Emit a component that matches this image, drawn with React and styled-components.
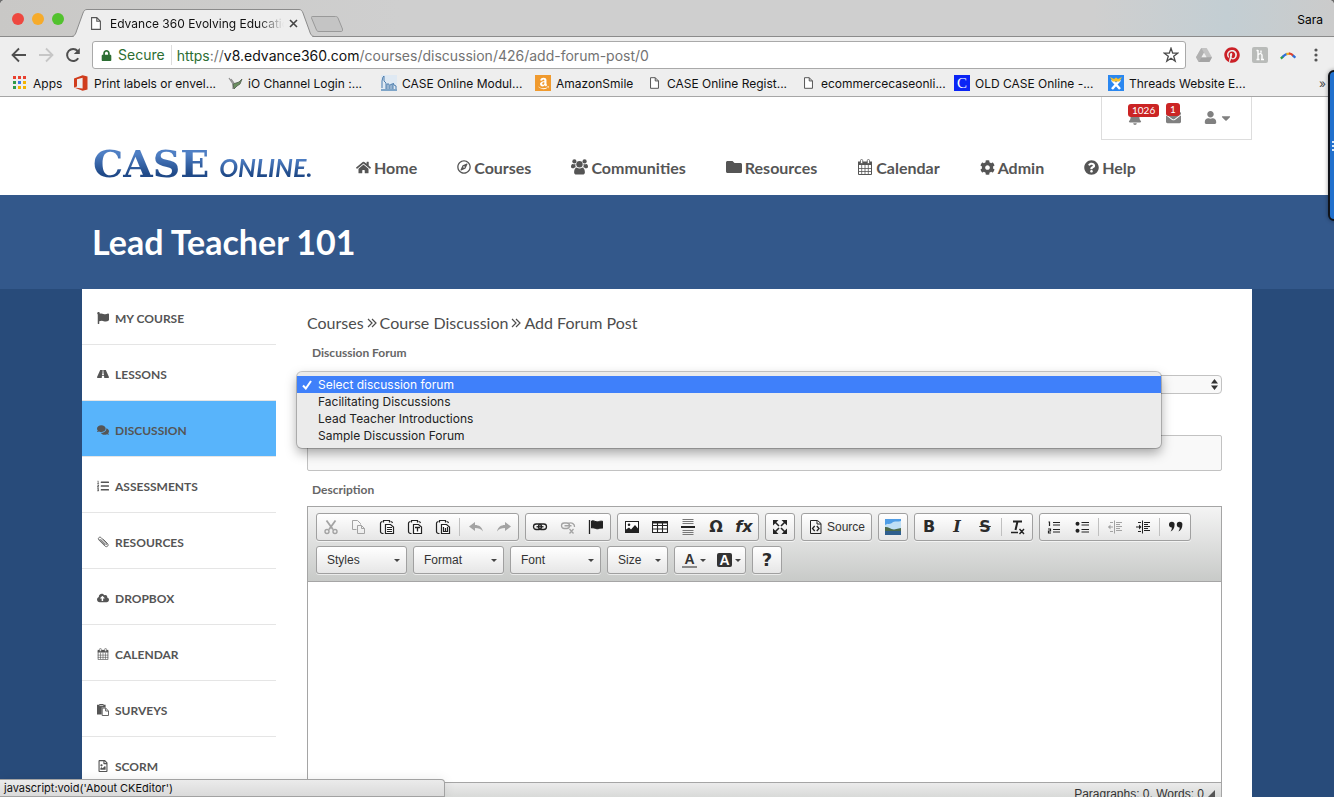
import React from 'react';
import styled, { createGlobalStyle, css } from 'styled-components';
import {
  FaHome, FaRegCompass, FaFolder, FaCog, FaQuestionCircle, FaFlag, FaRoad, FaComments,
  FaListOl, FaCloudUploadAlt, FaRegFileImage, FaBell, FaEnvelope, FaUser,
  FaCaretDown, FaLock, FaPinterest, FaAmazon,
} from 'react-icons/fa';

const GlobalStyle = createGlobalStyle`
  * { box-sizing: border-box; }
  body { margin: 0; background: #6d6d6d; }
  button, input, select, textarea { font: inherit; color: inherit; margin: 0; }
  button { border: 0; background: none; padding: 0; cursor: pointer; }
  a { color: inherit; text-decoration: none; }
  svg { display: block; flex: none; }
  ul { list-style: none; margin: 0; padding: 0; }
`;

/* ---------- icons ---------- */

const CalendarGrid = ({ size = 16 }) => (
  <svg width={size} height={size} viewBox="0 0 16 16" fill="none" stroke="currentColor">
    <path d="M1.5 3.5h13v12h-13z" />
    <path d="M1 9.5h14M1 12.5h14M4.7 6v9M8 6v9M11.3 6v9" strokeWidth=".8" />
    <rect x="1" y="2.500" width="14" height="3.500" fill="currentColor" stroke="none" />
    <rect x="3.500" y=".5" width="2.200" height="4" rx="1" fill="#fff" strokeWidth=".8" />
    <rect x="10.300" y=".5" width="2.200" height="4" rx="1" fill="#fff" strokeWidth=".8" />
  </svg>
);

const PeopleIcon = () => (
  <svg width="17" height="16" viewBox="0 0 17 16" fill="currentColor">
    <circle cx="3.400" cy="2.400" r="2.100" />
    <circle cx="13.600" cy="2.400" r="2.100" />
    <path d="M1.600 5c-1 .3-1.600 1.200-1.600 2.600 0 1 .5 1.600 1.400 1.600h1.400c.5-.6 1.200-1 2-1A4.500 4.500 0 0 1 4.500 5C3.600 5.400 2.500 5.400 1.600 5zM15.400 5c1 .3 1.600 1.200 1.600 2.600 0 1-.5 1.600-1.400 1.600h-1.400c-.5-.6-1.200-1-2-1A4.500 4.500 0 0 0 12.500 5c.9.4 2 .4 2.900 0z" />
    <circle cx="8.500" cy="5.300" r="3.200" />
    <path d="M5.800 8.400c-1.700.3-2.700 2-2.700 4.800 0 1.500.9 2.300 2.300 2.300h6.200c1.400 0 2.300-.8 2.300-2.300 0-2.800-1-4.500-2.700-4.800-1.600 1.300-3.800 1.300-5.400 0z" />
  </svg>
);

const ClipIcon = () => (
  <svg width="12" height="12" viewBox="0 0 12 12" fill="none" stroke="currentColor" strokeWidth=".9">
    <path d="M3.500 3.200l5 5c.9.9 1.900-.3 1.100-1.100L4.200 1.700C2.600.2.300 2.300 1.900 4l6 6c2 1.900 4.400-.6 2.500-2.500L6.200 3.300" />
    <path d="M2.400 3.200l5.800 5.900" strokeWidth=".7" />
  </svg>
);

const PasteSolid = () => (
  <svg width="12" height="12" viewBox="0 0 12 12">
    <path d="M0 .8h2.300V0h4.200v.8H8.600v2.700H4.700v7H0z" fill="currentColor" />
    <path d="M2.500 1.600h3.800" stroke="#fff" strokeWidth=".7" />
    <path d="M5.200 4.100h3.500l2.800 2.800v4.600H5.200zM8.600 4.200v2.800h2.800" fill="#fff" stroke="currentColor" strokeWidth=".9" />
  </svg>
);

const DoubleAngle = () => (
  <svg width="10" height="10" viewBox="0 0 10 10" fill="none" stroke="currentColor" strokeWidth="1.2">
    <path d="M1 1l4 4-4 4M5 1l4 4-4 4" />
  </svg>
);

const PageIcon = ({ w = 10, h = 13 }) => (
  <svg width={w} height={h} viewBox="0 0 10 13" fill="#fff" stroke="#555" strokeWidth="1.1">
    <path d="M.6.6h5.2l3.6 3.6v8.2H.6zM5.8.6v3.6h3.6" />
  </svg>
);

const BackIcon = () => (
  <svg width="16" height="16" viewBox="0 0 16 16" fill="none" stroke="currentColor" strokeWidth="1.8">
    <path d="M15 8H2M8 1.5L1.5 8 8 14.5" />
  </svg>
);

const ForwardIcon = () => (
  <svg width="16" height="16" viewBox="0 0 16 16" fill="none" stroke="currentColor" strokeWidth="1.8">
    <path d="M1 8h13M8 1.5L14.5 8 8 14.5" />
  </svg>
);

const ReloadIcon = () => (
  <svg width="16" height="16" viewBox="0 0 16 16" fill="none" stroke="currentColor" strokeWidth="2">
    <path d="M13.2 11.2A6 6 0 1 1 12.6 4" />
    <path d="M14.8 1v6H8.8z" fill="currentColor" stroke="none" />
  </svg>
);

const StarIcon = () => (
  <svg width="16" height="16" viewBox="0 0 16 16" fill="none" stroke="#4a4a4a" strokeWidth="1.3">
    <path d="M8 1.200l1.700 4.900 5 .1-4 3.100 1.500 4.900L8 11.300l-4.200 2.900 1.500-4.900-4-3.100 5-.1z" />
  </svg>
);

const DriveIcon = () => (
  <svg width="16" height="14" viewBox="0 0 16 14">
    <path d="M5.3 0h5.4L16 9.3 13.4 14H2.7L0 9.3z" fill="#c3c3c3" />
    <path d="M5.3 0L0 9.3 2.7 14 8 4.7z" fill="#b0b0b0" />
    <path d="M5.4 9.3h10.6L13.4 14H2.7z" fill="#a4a4a4" />
    <path d="M8 4.8l2.6 4.5H5.4z" fill="#eee" />
  </svg>
);

const HoneyIcon = () => (
  <svg width="16" height="16" viewBox="0 0 16 16">
    <rect width="16" height="16" rx="2" fill="#b9bbb9" />
    <path d="M6 3v9.5M4.500 3.500H6M4.500 12.500h3M6 8c1.500-2 4-1.800 4 .3v4.200M9 12.500h3M9 3.500v2.200" fill="none" stroke="#fff" strokeWidth="1.4" />
  </svg>
);

const ArcIcon = () => (
  <svg width="16" height="9" viewBox="0 0 18 10" fill="none" strokeWidth="2.600">
    <path d="M1 8.500L3.500 6" stroke="#2d9b4c" />
    <path d="M3 6.500C4.500 5 6 4 8 3" stroke="#2e6fd8" />
    <path d="M7.200 3.400L10.500 2.800" stroke="#f3b420" />
    <path d="M10 2.600C12 2.800 14 4 15 5.400" stroke="#dd4430" />
    <path d="M14.500 5L17.400 7.500" stroke="#2e6fd8" />
  </svg>
);

const DotsIcon = () => (
  <svg width="4" height="14" viewBox="0 0 4 14" fill="#555">
    <circle cx="2" cy="2" r="1.6" /><circle cx="2" cy="7" r="1.6" /><circle cx="2" cy="12" r="1.6" />
  </svg>
);

const AppsIcon = () => {
  const colors = ['#e8402f', '#e8402f', '#e8402f', '#2f9a4a', '#3b78e7', '#f4b400', '#2f9a4a', '#f4b400', '#f4b400'];
  return (
    <svg width="14" height="14" viewBox="0 0 14 14">
      {colors.map((c, i) => <rect key={i} x={(i % 3) * 5} y={Math.floor(i / 3) * 5} width="3" height="3" fill={c} />)}
    </svg>
  );
};

const OfficeIcon = () => (
  <svg width="14" height="16" viewBox="0 0 14 16">
    <path d="M0 3.500L8.600.2 13.500 1.600v12.800L8.600 15.800 0 12.600l8.600.9V2.800L3 4.200v7.200L0 12.600z" fill="#d03c1c" />
  </svg>
);

const HeronIcon = () => (
  <svg width="16" height="16" viewBox="0 0 16 16" fill="none">
    <path d="M2 3l4 6v5M4 4l3 4" stroke="#8d8d8d" strokeWidth="1.200" />
    <path d="M6 9l3-1 3-1 3-3-2 5-3 2-3 3z" fill="#6b8f60" stroke="#4e5a4b" strokeWidth=".8" />
  </svg>
);

const SkylineIcon = () => (
  <svg width="16" height="16" viewBox="0 0 16 16">
    <rect width="16" height="16" fill="#dfe9f3" />
    <path d="M1 13V6l1-4 1-1v5l2 2v6M6 14V9h2v5M9 14v-4l2-1v5M12 14V8l1 2 2 1v3" fill="none" stroke="#4f7fae" />
    <path d="M0 14h16v2H0z" fill="#7fa5c8" />
  </svg>
);

const RunnerIcon = () => (
  <svg width="16" height="16" viewBox="0 0 16 16">
    <rect width="16" height="16" fill="#2a87f0" />
    <path d="M4 14L12 5M12 14L4 5" stroke="#fff" strokeWidth="2.600" />
    <path d="M2 2l4 2 2-1.500L10 4l4-2-2.500 4.500h-7z" fill="#f7c02c" />
  </svg>
);

const Ink = ({ children, faded }) => (
  <svg width="16" height="16" viewBox="0 0 16 16" fill="none" stroke={faded ? '#a3a3a3' : '#222'} color={faded ? '#a3a3a3' : '#222'}>
    {children}
  </svg>
);

const Clipboard = ({ children }) => (
  <Ink>
    <path d="M4.500 14.500h-1a2 2 0 0 1-2-2v-8a2 2 0 0 1 2-2M11.500 2.500a2 2 0 0 1 2 1.500" strokeWidth="1.200" />
    <path d="M4.500 3.500v-2h6v2" strokeWidth="1.200" />
    <path d="M6.500 5.500h5l3 2.500v6.500h-8z" fill="#fff" strokeWidth="1.200" />
    {children}
  </Ink>
);

const glyphs = {
  Cut: <Ink faded><path d="M3.500 1.500l6.500 9M12.500 1.500L6 10.500" strokeWidth="1.800" /><circle cx="4" cy="12.500" r="2" strokeWidth="1.400" /><circle cx="12" cy="12.500" r="2" strokeWidth="1.400" /></Ink>,
  Copy: <Ink faded><path d="M5.500 10.500h-4v-9h5l3 3v1" /><path d="M6.500 6.500h4l3 3v5h-7zM10.500 6.500v3h3" /></Ink>,
  Paste: <Clipboard><path d="M8 8.500h5M8 10.500h5M8 12.500h5" /></Clipboard>,
  'Paste as plain text': <Clipboard><path d="M8 8.500h5M10.500 8.500v4" strokeWidth="1.300" /></Clipboard>,
  'Paste from Word': <Clipboard><path d="M8.500 8v4.500h4V8M10.500 9v3" strokeWidth="1.200" /></Clipboard>,
  Undo: <Ink faded><path d="M1 7.500L7 3v3c4 0 7 2 8 6.500-2-2.600-4.500-3.500-8-3.500v3z" fill="currentColor" stroke="none" /></Ink>,
  Redo: <Ink faded><path d="M15 7.500L9 3v3c-4 0-7 2-8 6.500 2-2.600 4.500-3.500 8-3.500v3z" fill="currentColor" stroke="none" /></Ink>,
  Link: <Ink><rect x="1.500" y="5" width="8" height="5.500" rx="2.700" strokeWidth="1.300" /><rect x="6.500" y="5" width="8" height="5.500" rx="2.700" strokeWidth="1.300" /><path d="M4.500 7.750h7" strokeWidth="1.300" /></Ink>,
  Unlink: <Ink faded><rect x="1.500" y="4" width="8" height="5.500" rx="2.700" strokeWidth="1.300" /><path d="M8 4.500c4-1.500 7 .5 6.500 3.500M4.500 6.750h7M9.500 10l4 4.500M13.500 10l-4 4.500" strokeWidth="1.300" /></Ink>,
  Anchor: <Ink><path d="M1.500 1v14" strokeWidth="1.300" /><path d="M3.500 2c2.500-1 4 1.200 6 .8 1.500-.3 2.500-.8 5-.6v7c-2-.6-4 .8-5.500.6C7 9.600 5.500 8.200 3.500 9z" fill="currentColor" /></Ink>,
  Image: <Ink><rect x="1.500" y="2.500" width="13" height="11" fill="#fff" /><path d="M2 13v-2.500l3-2 2 2 4-4.500 3 3.500V13z" fill="currentColor" stroke="none" /><circle cx="5" cy="5.800" r="1.300" fill="currentColor" stroke="none" /></Ink>,
  Table: <Ink><path d="M.5 2.500h15v11H.5zM0 6.500h16M0 10h16M5.500 3v11M10.500 3v11" fill="#fff" strokeWidth="1.100" /><path d="M0 2h16v2.500H0z" fill="currentColor" stroke="none" /></Ink>,
  'Horizontal line': <Ink><path d="M2.500 .5h11M2.500 2.500h11M2.500 4.500h11M2.500 11.500h11M2.500 13.500h11M2.500 15.500h11" stroke="#777" /><path d="M1 8h14" strokeWidth="2" /></Ink>,
  Maximize: <Ink><path d="M1 1h5.500L1 6.500zM15 1H9.500L15 6.500zM1 15h5.500L1 9.500zM15 15H9.500L15 9.500z" fill="currentColor" stroke="none" /><path d="M3 3l4 4M13 3L9 7M3 13l4-4M13 13L9 9" strokeWidth="1.600" /></Ink>,
  'Numbered list': <Ink><path d="M7 3.500h7M7 6h7M7 10.500h7M7 13h7" strokeWidth="1.200" /><path d="M2.500 3h1v4M2 10h2.500v2H2.500v2h2.500" strokeWidth="1.200" /></Ink>,
  'Bulleted list': <Ink><path d="M7.500 3.500H15M7.500 6H15M7.500 10.500H15M7.500 13H15" strokeWidth="1.200" /><circle cx="3.500" cy="4.700" r="2" fill="currentColor" stroke="none" /><circle cx="3.500" cy="11.700" r="2" fill="currentColor" stroke="none" /></Ink>,
  'Decrease indent': <Ink faded><path d="M7.500 1.500v13M9 3.500h6M9 5.500h4M9 7.500h6M9 9.500h4M9 11.500h6M3 3.500h3M3 12.500h3M1.500 8H6" /><path d="M3.500 5.500L1 8l2.500 2.500z" fill="currentColor" stroke="none" /></Ink>,
  'Increase indent': <Ink><path d="M7.500 1.500v13M9 3.500h6M9 5.500h4M9 7.500h6M9 9.500h4M9 11.500h6M3 3.500h3M3 12.500h3M1 8h4" /><path d="M4 5.500L6.500 8 4 10.500z" fill="currentColor" stroke="none" /></Ink>,
  'Block quote': <Ink><path d="M1 5.500a2.700 2.700 0 1 1 5.600 0c0 3.500-1.600 6-4 7 .9-1.300 1.300-2.500 1.300-4A2.700 2.700 0 0 1 1 5.500zM8.800 5.500a2.700 2.700 0 1 1 5.600 0c0 3.500-1.600 6-4 7 .9-1.300 1.300-2.500 1.300-4a2.700 2.700 0 0 1-2.900-3z" fill="currentColor" stroke="none" /></Ink>,
};

const SourceGlyph = () => (
  <Ink>
    <path d="M2.500 1.500h7l3.500 3v10H2.500zM9 2v3h4" />
    <path d="M6.700 7L4.500 9.500 6.700 12M8.800 7L11 9.500 8.800 12" strokeWidth="1.300" />
  </Ink>
);

const PhotoGlyph = () => (
  <svg width="16" height="16" viewBox="0 0 16 16">
    <rect width="16" height="16" fill="#4f9de6" />
    <path d="M0 6c3-2 5 0 8-3 3-1 5 0 8-1v9H0z" fill="#bfdff6" />
    <path d="M0 8c3-.5 5 2 9 2.500L16 9v3H0z" fill="#4c6a4a" />
    <path d="M0 12h16v4H0z" fill="#2f5f8e" />
  </svg>
);

const Caret = () => (
  <svg width="6" height="3" viewBox="0 0 6 3" fill="#444"><path d="M0 0h6L3 3z" /></svg>
);

const SelectArrows = styled.svg`
  position: absolute;
  right: 4px;
  top: 4px;
  pointer-events: none;
`;

/* ---------- browser window ---------- */

const chromeFont = css`font-family: Inter, Roboto, "Liberation Sans", sans-serif;`;

const Window = styled.div`
  position: relative;
  display: flex;
  flex-direction: column;
  height: 100vh;
  overflow: hidden;
  border-radius: 5px 5px 0 0;
  background: #eee;
`;

const TabStrip = styled.header`
  ${chromeFont}
  display: flex;
  align-items: flex-end;
  height: 37px;
  padding: 0 11px 0 12px;
  background: linear-gradient(90deg, #c9c8c6 0%, #cfcfcf 30%, #cfcfcf 82%, #c3ced3 92%, #cbcbcb 100%);
  border-bottom: 1px solid #8b8b8b;
  font-size: 12px;
`;

const Lights = styled.div`
  display: flex;
  gap: 8px;
  align-self: center;
  width: 60px;
  padding-top: 2px;
`;

const Light = styled.button`
  width: 12px;
  height: 12px;
  border-radius: 50%;
  background: ${(props) => props.$color};
`;

const Tab = styled.div`
  position: relative;
  display: flex;
  align-items: center;
  width: 242px;
  height: 28px;
  margin-bottom: -1px;
  padding: 0 16px 0 19px;
`;

const TabShape = styled.svg`
  position: absolute;
  inset: 0;
  width: 100%;
  height: 100%;
`;

const TabTitle = styled.span`
  position: relative;
  flex: 1;
  margin-left: 9px;
  overflow: hidden;
  white-space: nowrap;
  color: #111;
  mask-image: linear-gradient(90deg, #000 85%, transparent 100%);
`;

const TabIcon = styled.span`
  position: relative;
`;

const TabClose = styled.button`
  position: relative;
  margin-left: 5px;
`;

const NewTab = styled.button`
  align-self: center;
  margin: 11px 0 0 -3px;
`;

const Profile = styled.button`
  margin: 0 0 9px auto;
`;

const AddressBar = styled.div`
  ${chromeFont}
  display: flex;
  align-items: center;
  height: 36px;
  padding: 0 16px 0 11px;
  color: #555;
`;

const NavButton = styled.button`
  width: 27px;
  color: ${(props) => (props.$faded ? '#c6c6c6' : '#4f4f4f')};
`;

const Omnibox = styled.div`
  display: flex;
  flex: 1;
  align-items: center;
  height: 28px;
  margin-right: 10px;
  padding: 0 6px 0 8px;
  background: #fff;
  border: 1px solid #a9a9a9;
  border-radius: 3px;
  font-size: 14px;
  color: #2c6e33;
`;

const Secure = styled.span`
  margin-left: 6px;
  padding-right: 6px;
  border-right: 1px solid #ddd;
  line-height: 20px;
`;

const Url = styled.span`
  flex: 1;
  margin-left: 5px;
  color: #737373;
  b { font-weight: 400; color: #111; }
  i { font-style: normal; color: #2c6e33; }
`;

const Extensions = styled.div`
  display: flex;
  align-items: center;
  gap: 12px;
`;

const Extension = styled.button`
  display: flex;
  justify-content: center;
  width: 16px;
`;

const MenuButton = styled.button`
  margin-left: 6px;
`;

const Bookmarks = styled.nav`
  ${chromeFont}
  display: flex;
  align-items: center;
  height: 24px;
  padding: 0 8px 3px 12px;
  border-bottom: 1px solid #a6a6a6;
  font-size: 12px;
  color: #111;
`;

const Bookmark = styled.a`
  display: flex;
  flex: 0 0 ${(props) => props.$width ?? '154px'};
  align-items: center;
  gap: 5px;
  white-space: nowrap;
`;

const BookmarkIcon = styled.span`
  display: flex;
  align-items: center;
  justify-content: center;
  width: 16px;
  height: 16px;
  background: ${(props) => props.$bg ?? 'none'};
  color: #fff;
  font: 15px "Liberation Serif", serif;
`;

const More = styled.button`
  margin-left: auto;
  color: #444;
`;

const StatusBubble = styled.div`
  ${chromeFont}
  position: absolute;
  left: 0;
  bottom: 0;
  width: 445px;
  height: 18px;
  padding-left: 4px;
  background: linear-gradient(#ebebeb, #dadada);
  border: 1px solid #a2a2a2;
  border-left: 0;
  border-radius: 0 4px 0 0;
  box-shadow: 0 0 12px rgba(0, 0, 0, 0.08);
  font-size: 11px;
  line-height: 16px;
  color: #111;
`;

const EdgePanel = styled.div`
  position: absolute;
  right: -4px;
  top: 70px;
  display: flex;
  flex-direction: column;
  justify-content: center;
  gap: 2px;
  width: 10px;
  height: 151px;
  padding-left: 2px;
  background: #2170cd;
  border: 2px solid #10131a;
  border-radius: 6px 0 0 6px;
  box-shadow: 0 0 4px rgba(0, 0, 0, 0.4);
  span { height: 2px; background: #dce9f8; }
`;

/* ---------- page ---------- */

const Page = styled.div`
  flex: 1;
  overflow: hidden;
  background: #284b7a;
  font-family: Lato, "Liberation Sans", sans-serif;
  color: #555;
`;

const Container = styled.div`
  width: 100%;
  max-width: 1170px;
  margin: 0 auto;
`;

const SiteHeader = styled.header`
  background: #fff;
`;

const HeaderInner = styled(Container)`
  display: flex;
  flex-direction: column;
  height: 98px;
`;

const UserBox = styled.div`
  display: flex;
  align-self: flex-end;
  align-items: center;
  height: 43px;
  width: 151px;
  padding-left: 26px;
  border: 1px solid #ddd;
  border-top: 0;
  color: #808080;
`;

const UserButton = styled.button`
  position: relative;
  display: flex;
  flex: none;
  align-items: center;
  gap: 2px;
  width: 38px;
`;

const Badge = styled.span`
  position: absolute;
  left: 0;
  top: -7px;
  padding: 0 4px;
  background: #cb2424;
  border-radius: 3px;
  font-size: 10px;
  line-height: 13px;
  color: #fff;
`;

const Brand = styled.div`
  display: flex;
  align-items: center;
  height: 56px;
  padding-left: 11px;
`;

const Logo = styled.a`
  display: flex;
  align-items: baseline;
  gap: 10px;
  width: 263px;
  padding-bottom: 6px;
  line-height: 40px;
  span {
    background: linear-gradient(#4f7fc4 25%, #1f4988 75%);
    background-clip: text;
    color: transparent;
  }
`;

const LogoName = styled.span`
  font: bold 38px/40px "DejaVu Serif", serif;
`;

const LogoSub = styled.span`
  font: italic bold 25px/32px Lato, sans-serif;
`;

const MainNav = styled.nav`
  display: flex;
  gap: 40px;
  font-size: 16px;
  font-weight: 700;
`;

const MainLink = styled.a`
  display: flex;
  align-items: center;
  gap: 3px;
`;

const Banner = styled.div`
  background: #33588b;
  h1 {
    margin: 0;
    padding-left: 10px;
    font-size: 34px;
    font-weight: 700;
    line-height: 94px;
    color: #fff;
  }
`;

const Columns = styled(Container)`
  display: flex;
  background: #fff;
`;

const SideNav = styled.nav`
  flex: 0 0 194px;
`;

const SideLink = styled.a`
  display: flex;
  align-items: center;
  gap: 6px;
  height: 56px;
  padding: 3px 15px 0;
  border-bottom: 1px solid #e5e5e5;
  background: ${(props) => (props.$active ? '#58b4fb' : '#fff')};
  font-size: 12px;
  font-weight: 700;
`;

const Main = styled.main`
  flex: 1;
  min-width: 0;
  padding: 23px 30px 30px 31px;
`;

const Crumbs = styled.nav`
  display: flex;
  align-items: center;
  gap: 3px;
  font-size: 16px;
  line-height: 22px;
  color: #4d4d4d;
`;

const Label = styled.label`
  display: block;
  padding: 9px 5px 0;
  font-size: 12px;
  font-weight: 700;
  line-height: 20px;
  color: #666;
`;

const SelectWrap = styled.div`
  position: relative;
  margin-top: 12px;
`;

const ForumSelect = styled.select`
  display: block;
  width: 100%;
  height: 19px;
  appearance: none;
  background: #f9f9f9;
  border: 1px solid #c2c2c2;
  border-radius: 4px;
  font-size: 12px;
`;

const Options = styled.ul`
  ${chromeFont}
  position: absolute;
  z-index: 1;
  top: -3px;
  left: -10px;
  right: 61px;
  padding: 4px 0;
  background: #ebebeb;
  border-radius: 5px;
  box-shadow: 0 0 0 1px rgba(0, 0, 0, 0.2), 0 5px 12px rgba(0, 0, 0, 0.35);
  font-size: 12px;
  line-height: 17px;
  color: #222;
`;

const Option = styled.li`
  display: flex;
  align-items: center;
  padding-left: ${(props) => (props.$selected ? '5px' : '21px')};
  background: ${(props) => (props.$selected ? '#3f80fa' : 'none')};
  color: ${(props) => (props.$selected ? '#fff' : 'inherit')};
  svg { margin-right: 6px; }
`;

const TitleInput = styled.input`
  display: block;
  width: 100%;
  height: 36px;
  margin-top: 41px;
  padding: 0 10px;
  background: #f9f9f9;
  border: 1px solid #c2c2c2;
  border-radius: 2px;
`;

const Editor = styled.div`
  margin-top: 6px;
  border: 1px solid #a5a5a5;
  font-family: "Liberation Sans", Arial, sans-serif;
  font-size: 12px;
  color: #333;
`;

const Toolbar = styled.div`
  display: flex;
  flex-wrap: wrap;
  gap: 5px 6px;
  padding: 6px 8px 7px;
  background: linear-gradient(#f4f4f4, #c8cac8);
  border-bottom: 1px solid #a5a5a5;
`;

const Group = styled.div`
  display: flex;
  align-items: center;
  height: 28px;
  border: 1px solid #a0a0a0;
  border-radius: 3px;
  background: linear-gradient(#fff, #e6e6e6);
  box-shadow: 0 1px 0 rgba(255, 255, 255, 0.6);
`;

const ToolButton = styled.button`
  display: flex;
  align-items: center;
  justify-content: center;
  gap: 3px;
  min-width: 28px;
  height: 26px;
  padding: 0 ${(props) => (props.$wide ? '6px' : '0')};
`;

const Separator = styled.span`
  width: 1px;
  height: 18px;
  margin: 0 2px;
  background: #c0c0c0;
`;

const Combo = styled.button`
  display: flex;
  align-items: center;
  justify-content: space-between;
  width: ${(props) => props.$width};
  height: 26px;
  padding: 0 6px 0 10px;
`;

const Letter = styled.span`
  font-family: ${(props) => props.$font ?? '"DejaVu Sans", sans-serif'};
  font-size: ${(props) => props.$size ?? '14px'};
  font-weight: 700;
  font-style: ${(props) => (props.$italic ? 'italic' : 'normal')};
  text-decoration: ${(props) => (props.$strike ? 'line-through' : 'none')};
  line-height: 16px;
  color: #2b2b2b;
`;

const ColorButton = styled.button`
  display: flex;
  align-items: center;
  gap: 3px;
  width: 35px;
  padding-left: 7px;
`;

const ColorLetter = styled.span`
  width: 15px;
  line-height: 14px;
  border-radius: ${(props) => (props.$filled ? '2px' : '0')};
  border-bottom: ${(props) => (props.$filled ? '0' : '2px solid #888')};
  background: ${(props) => (props.$filled ? '#333' : 'none')};
  color: ${(props) => (props.$filled ? '#fff' : '#333')};
  font-size: 14px;
  font-weight: 700;
  text-align: center;
`;

const Writing = styled.textarea`
  display: block;
  width: 100%;
  height: 200px;
  padding: 20px;
  border: 0;
  resize: none;
  background: #fff;
`;

const EditorFoot = styled.div`
  display: flex;
  justify-content: flex-end;
  align-items: center;
  gap: 4px;
  height: 22px;
  padding-right: 6px;
  border-top: 1px solid #a5a5a5;
  background: linear-gradient(#ebebeb, #cfd1cf);
`;

const bookmarks = [
  { title: 'Apps', icon: <AppsIcon />, width: '61px' },
  { title: 'Print labels or envel...', icon: <OfficeIcon /> },
  { title: 'iO Channel Login :...', icon: <HeronIcon /> },
  { title: 'CASE Online Modul...', icon: <SkylineIcon /> },
  { title: 'AmazonSmile', icon: <FaAmazon size={13} />, bg: '#f09a2e', width: '111px' },
  { title: 'CASE Online Regist...', icon: <PageIcon w={9} h={12} /> },
  { title: 'ecommercecaseonli...', icon: <PageIcon w={9} h={12} /> },
  { title: 'OLD CASE Online -...', icon: 'C', bg: '#0a24f5' },
  { title: 'Threads Website E...', icon: <RunnerIcon /> },
];

const mainLinks = [
  ['Home', <FaHome size={15} />],
  ['Courses', <FaRegCompass size={14} />],
  ['Communities', <PeopleIcon />],
  ['Resources', <FaFolder size={16} />],
  ['Calendar', <CalendarGrid size={16} />],
  ['Admin', <FaCog size={15} />],
  ['Help', <FaQuestionCircle size={15} />],
];

const sideLinks = [
  ['MY COURSE', <FaFlag size={12} />],
  ['LESSONS', <FaRoad size={12} />],
  ['DISCUSSION', <FaComments size={12} />],
  ['ASSESSMENTS', <FaListOl size={12} />],
  ['RESOURCES', <ClipIcon />],
  ['DROPBOX', <FaCloudUploadAlt size={12} />],
  ['CALENDAR', <CalendarGrid size={12} />],
  ['SURVEYS', <PasteSolid />],
  ['SCORM', <FaRegFileImage size={12} />],
];

const forums = ['Select discussion forum', 'Facilitating Discussions', 'Lead Teacher Introductions', 'Sample Discussion Forum'];

const Tool = ({ name }) => (
  <ToolButton type="button" aria-label={name}>{glyphs[name]}</ToolButton>
);

const tools = (names) => names.map((name) => <Tool key={name} name={name} />);

const BrowserChrome = () => (
  <React.Fragment>
    <TabStrip>
      <Lights>
        <Light $color="#ee4840" aria-label="Close window" />
        <Light $color="#f6ab2b" aria-label="Minimize window" />
        <Light $color="#52c22e" aria-label="Zoom window" />
      </Lights>
      <Tab>
        <TabShape viewBox="0 0 242 28" preserveAspectRatio="none">
          <path d="M0 27.500C3 27 3.500 25 4.500 22L11 4C12 1.500 13 .5 15 .5H227C229 .5 230 1.500 231 4L237.500 22C238.500 25 239 27 242 27.500" fill="#eee" stroke="#8b8b8b" />
          <path d="M2 27.500H240" stroke="#eee" strokeWidth="1.400" />
        </TabShape>
        <TabIcon><PageIcon w={10} h={13} /></TabIcon>
        <TabTitle>Edvance 360 Evolving Education</TabTitle>
        <TabClose aria-label="Close tab">
          <svg width="9" height="9" viewBox="0 0 9 9" stroke="#444" strokeWidth="1.600"><path d="M1 1l7 7M8 1L1 8" /></svg>
        </TabClose>
      </Tab>
      <NewTab aria-label="New tab">
        <svg width="32" height="16" viewBox="0 0 32 16" fill="#c4c4c4" stroke="#999">
          <path d="M.5 2C0 1 .5.500 2 .5H24.500C26 .5 26.500 1 27 2L31.500 13C32 15 31 15.500 30 15.500H8C6.500 15.500 6 15 5.500 14z" />
        </svg>
      </NewTab>
      <Profile>Sara</Profile>
    </TabStrip>
    <AddressBar>
      <NavButton aria-label="Back"><BackIcon /></NavButton>
      <NavButton $faded aria-label="Forward"><ForwardIcon /></NavButton>
      <NavButton aria-label="Reload"><ReloadIcon /></NavButton>
      <Omnibox>
        <FaLock size={11} />
        <Secure>Secure</Secure>
        <Url><i>https</i>://<b>v8.edvance360.com</b>/courses/discussion/426/add-forum-post/0</Url>
        <StarIcon />
      </Omnibox>
      <Extensions>
        <Extension aria-label="Drive"><DriveIcon /></Extension>
        <Extension aria-label="Pinterest"><FaPinterest size={16} color="#cb2027" /></Extension>
        <Extension aria-label="Honey"><HoneyIcon /></Extension>
        <Extension aria-label="Arc"><ArcIcon /></Extension>
        <MenuButton aria-label="Menu"><DotsIcon /></MenuButton>
      </Extensions>
    </AddressBar>
    <Bookmarks>
      {bookmarks.map((item) => (
        <Bookmark key={item.title} href="#" $width={item.width}>
          <BookmarkIcon $bg={item.bg}>{item.icon}</BookmarkIcon>
          {item.title}
        </Bookmark>
      ))}
      <More>»</More>
    </Bookmarks>
  </React.Fragment>
);

const EditorPanel = () => (
  <Editor>
    <Toolbar>
      <Group>
        {tools(['Cut', 'Copy', 'Paste', 'Paste as plain text', 'Paste from Word'])}
        <Separator />
        {tools(['Undo', 'Redo'])}
      </Group>
      <Group>{tools(['Link', 'Unlink', 'Anchor'])}</Group>
      <Group>
        {tools(['Image', 'Table', 'Horizontal line'])}
        <ToolButton type="button"><Letter $size="16px">Ω</Letter></ToolButton>
        <ToolButton type="button"><Letter $size="16px" $italic>fx</Letter></ToolButton>
      </Group>
      <Group>{tools(['Maximize'])}</Group>
      <Group><ToolButton type="button" $wide><SourceGlyph />Source</ToolButton></Group>
      <Group><ToolButton type="button" aria-label="Insert photo"><PhotoGlyph /></ToolButton></Group>
      <Group>
        <ToolButton type="button"><Letter $size="16px">B</Letter></ToolButton>
        <ToolButton type="button"><Letter $size="16px" $italic $font='"DejaVu Serif", serif'>I</Letter></ToolButton>
        <ToolButton type="button"><Letter $size="16px" $strike>S</Letter></ToolButton>
        <Separator />
        <ToolButton type="button" aria-label="Remove format">
          <Ink>
            <path d="M3 2.500h9M7.500 2.500L5.500 11" strokeWidth="2" />
            <path d="M1 13.500h7M9.500 10l4.500 5M14 10l-4.500 5" strokeWidth="1.400" />
          </Ink>
        </ToolButton>
      </Group>
      <Group>
        {tools(['Numbered list', 'Bulleted list'])}
        <Separator />
        {tools(['Decrease indent', 'Increase indent'])}
        <Separator />
        {tools(['Block quote'])}
      </Group>
      {['Styles', 'Format', 'Font', 'Size'].map((name) => (
        <Group key={name}>
          <Combo type="button" $width={name === 'Size' ? '59px' : '89px'}>{name}<Caret /></Combo>
        </Group>
      ))}
      <Group>
        <ColorButton type="button"><ColorLetter>A</ColorLetter><Caret /></ColorButton>
        <ColorButton type="button"><ColorLetter $filled>A</ColorLetter><Caret /></ColorButton>
      </Group>
      <Group><ToolButton type="button"><Letter $size="18px">?</Letter></ToolButton></Group>
    </Toolbar>
    <Writing id="description" />
    <EditorFoot>
      Paragraphs: 0, Words: 0
      <svg width="7" height="7" viewBox="0 0 7 7" fill="#555"><path d="M7 0v7H0z" /></svg>
    </EditorFoot>
  </Editor>
);

const App = () => (
  <React.Fragment>
    <GlobalStyle />
    <Window>
      <BrowserChrome />
      <Page>
        <SiteHeader>
          <HeaderInner>
            <UserBox>
              <UserButton aria-label="Notifications"><FaBell size={14} /><Badge>1026</Badge></UserButton>
              <UserButton aria-label="Messages"><FaEnvelope size={15} /><Badge>1</Badge></UserButton>
              <UserButton aria-label="Account"><FaUser size={13} /><FaCaretDown size={14} /></UserButton>
            </UserBox>
            <Brand>
              <Logo href="#">
                <LogoName>CASE</LogoName>
                <LogoSub>ONLINE.</LogoSub>
              </Logo>
              <MainNav>
                {mainLinks.map(([name, icon]) => (
                  <MainLink key={name} href="#">{icon}{name}</MainLink>
                ))}
              </MainNav>
            </Brand>
          </HeaderInner>
        </SiteHeader>
        <Banner>
          <Container><h1>Lead Teacher 101</h1></Container>
        </Banner>
        <Columns>
          <SideNav>
            {sideLinks.map(([name, icon]) => (
              <SideLink key={name} href="#" $active={name === 'DISCUSSION'}>{icon}{name}</SideLink>
            ))}
          </SideNav>
          <Main>
            <Crumbs>
              <a href="#">Courses</a><DoubleAngle />
              <a href="#">Course Discussion</a><DoubleAngle />
              <span>Add Forum Post</span>
            </Crumbs>
            <Label htmlFor="forum">Discussion Forum</Label>
            <SelectWrap>
              <ForumSelect id="forum">
                {forums.map((name) => <option key={name}>{name}</option>)}
              </ForumSelect>
              <SelectArrows width="7" height="11" viewBox="0 0 7 11" fill="#333"><path d="M0 4.500h7L3.500 0zM0 6.500h7L3.500 11z" /></SelectArrows>
              <Options role="listbox">
                {forums.map((name, index) => (
                  <Option key={name} role="option" aria-selected={index === 0} $selected={index === 0}>
                    {index === 0 && (
                      <svg width="10" height="10" viewBox="0 0 10 10" fill="none" stroke="#fff" strokeWidth="2"><path d="M1 5.500l2.800 3L9 1" /></svg>
                    )}
                    {name}
                  </Option>
                ))}
              </Options>
            </SelectWrap>
            <TitleInput type="text" aria-label="Title" />
            <Label htmlFor="description">Description</Label>
            <EditorPanel />
          </Main>
        </Columns>
      </Page>
      <StatusBubble>javascript:void('About CKEditor')</StatusBubble>
      <EdgePanel><span /><span /><span /></EdgePanel>
    </Window>
  </React.Fragment>
);

export default App;
